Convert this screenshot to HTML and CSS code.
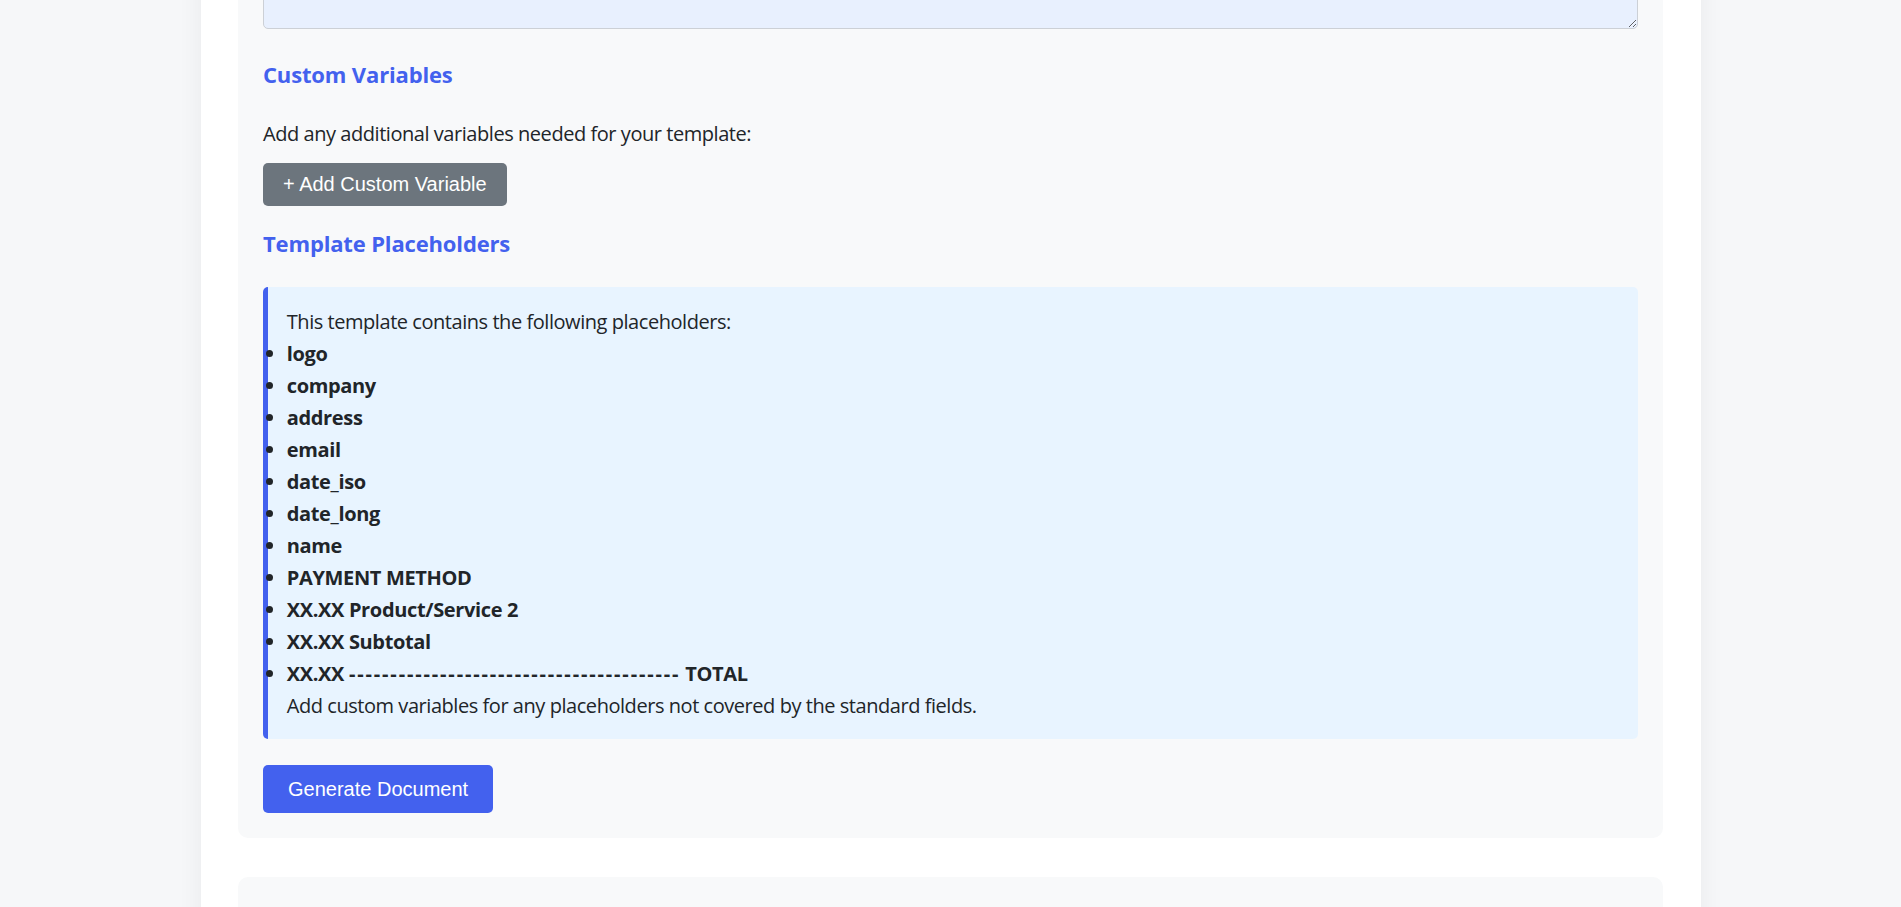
FILE: index.html
```html
<!DOCTYPE html>
<html lang="en">
<head>
  <meta charset="UTF-8" />
  <meta name="viewport" content="width=device-width, initial-scale=1.0" />
  <title>Document Generator</title>
  <link rel="stylesheet" href="styles.css">
</head>
<body>
  <main class="container">
    <section class="card">
      <div class="form-group">
        <textarea class="template-input" id="templateContent"></textarea>
      </div>

      <!-- Custom variables -->
      <h3 class="section-title">Custom Variables</h3>
      <p class="hint">Add any additional variables needed for your template:</p>
      <div id="customVariables"></div>
      <button class="btn btn-secondary" id="addVariableButton">+ Add Custom Variable</button>

      <!-- Placeholders found in the template -->
      <h3 class="section-title">Template Placeholders</h3>
      <div class="placeholder-info">
        This template contains the following placeholders:
        <ul>
          <li>logo</li>
          <li>company</li>
          <li>address</li>
          <li>email</li>
          <li>date_iso</li>
          <li>date_long</li>
          <li>name</li>
          <li>PAYMENT METHOD</li>
          <li>XX.XX Product/Service 2</li>
          <li>XX.XX Subtotal</li>
          <li>XX.XX <span class="rule">----------------------------------------</span> TOTAL</li>
        </ul>
        Add custom variables for any placeholders not covered by the standard fields.
      </div>

      <button class="btn btn-primary" id="generateButton">Generate Document</button>
    </section>

    <section class="card result"></section>
  </main>
</body>
</html>
```

FILE: styles.css
```css
* {
  box-sizing: border-box;
}
body {
  margin: 0;
  background-color: #f6f7f9;
  font-family: "Open Sans", sans-serif;
  font-size: 20px;
  line-height: 1.6;
  letter-spacing: -0.45px;
  color: #212529;
}
.container {
  width: 1500px;
  margin: -234px auto 0;
  padding: 37.5px;
  background-color: #fff;
  box-shadow: 0 0 25px rgba(0, 0, 0, 0.06);
  min-height: 1200px;
}
.card {
  background-color: #f8f9fa;
  border-radius: 10px;
  padding: 25px;
}
.card + .card {
  margin-top: 39px;
}
.result {
  min-height: 200px;
}
.form-group {
  margin-bottom: 28.5px;
}
.template-input {
  display: block;
  width: 100%;
  height: 200px;
  padding: 12px;
  background-color: #e8f0fe;
  border: 1px solid #ccd0d6;
  border-radius: 5px;
  font-family: inherit;
  font-size: 20px;
}
.section-title {
  margin: 20px 0 26px;
  font-size: 22px;
  font-weight: 700;
  letter-spacing: -0.15px;
  color: #4361ee;
}
.hint {
  margin: 0 0 12.5px;
}
.btn {
  display: inline-block;
  border: none;
  border-radius: 5px;
  color: #fff;
  font-family: "Liberation Sans", Arial, sans-serif;
  font-size: 20px;
  letter-spacing: 0;
  cursor: pointer;
}
.btn-secondary {
  padding: 10px 20px;
  background-color: #6c757d;
}
.btn-primary {
  padding: 12.5px 25px;
  margin-top: 26px;
  background-color: #4361ee;
}
.placeholder-info {
  padding: 19.5px 18.75px 17px;
  background-color: #e8f4ff;
  border-left: 5px solid #4361ee;
  border-radius: 5px;
}
.placeholder-info ul {
  margin: 0;
  padding: 0;
}
.placeholder-info li {
  font-weight: 700;
  letter-spacing: -0.35px;
}
.placeholder-info .rule {
  letter-spacing: 1.85px;
}
```
